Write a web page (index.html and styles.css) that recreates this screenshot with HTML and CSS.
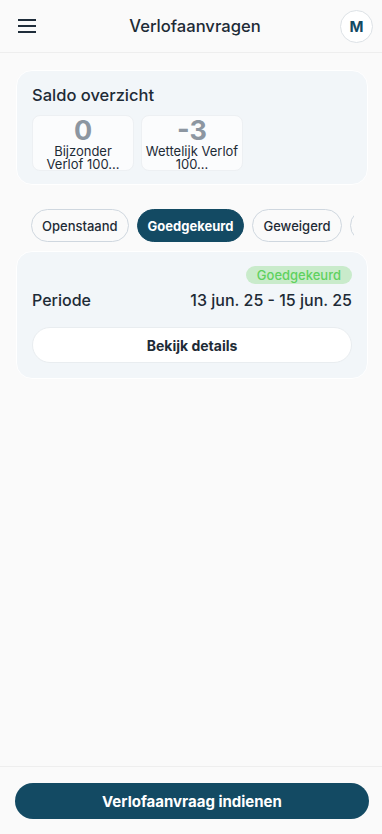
FILE: index.html
```html
<!DOCTYPE html>
<html lang="nl">
<head>
<meta charset="utf-8">
<link rel="stylesheet" href="styles.css">
</head>
<body>
<div class="app">
  <header class="topbar">
    <button class="menu" aria-label="Menu">
      <svg width="18" height="14" viewBox="0 0 18 14"><path d="M0 1h18M0 7h18M0 13h18" stroke="#1f2d3a" stroke-width="2"/></svg>
    </button>
    <h1 class="title">Verlofaanvragen</h1>
    <div class="avatar">M</div>
  </header>

  <main class="content">
    <section class="card saldo">
      <h2 class="saldo-title">Saldo overzicht</h2>
      <div class="tiles">
        <div class="tile">
          <div class="tile-num">0</div>
          <div class="tile-label">Bijzonder Verlof 100...</div>
        </div>
        <div class="tile">
          <div class="tile-num">-3</div>
          <div class="tile-label">Wettelijk Verlof 100...</div>
        </div>
      </div>
    </section>

    <nav class="tabs">
      <span class="tab">Openstaand</span>
      <span class="tab active">Goedgekeurd</span>
      <span class="tab">Geweigerd</span>
      <span class="tab">Geannuleerd</span>
    </nav>

    <section class="card request">
      <div class="badge-row"><span class="badge">Goedgekeurd</span></div>
      <div class="period">
        <span class="period-label">Periode</span>
        <span class="period-value">13 jun. 25 - 15 jun. 25</span>
      </div>
      <button class="details">Bekijk details</button>
    </section>
  </main>

  <footer class="bottombar">
    <button class="primary">Verlofaanvraag indienen</button>
  </footer>
</div>
</body>
</html>
```

FILE: styles.css
```css
* { box-sizing: border-box; }
html, body { margin: 0; padding: 0; }
body {
  background: #fafafa;
  font-family: "Inter", "Noto Sans", sans-serif;
  color: #1e2b36;
}
.app {
  display: flex;
  flex-direction: column;
  height: 834px;
}
.topbar {
  height: 53px;
  display: flex;
  align-items: center;
  justify-content: space-between;
  padding: 0 9px 0 18px;
  border-bottom: 1px solid #eeeeee;
  background: #fafafa;
}
.menu {
  border: 0;
  background: none;
  padding: 0;
  width: 18px;
  height: 14px;
  display: flex;
}
.title {
  margin: 0;
  font-size: 16.6px;
  font-weight: 500;
  color: #1e2b36;
  padding-left: 14px;
}
.avatar {
  width: 33px;
  height: 33px;
  border-radius: 50%;
  background: #ffffff;
  border: 1px solid #dde2e6;
  display: flex;
  align-items: center;
  justify-content: center;
  font-weight: 700;
  font-size: 15px;
  color: #134a63;
}
.content {
  flex: 1;
  padding: 17px 14px 0 16px;
  display: flex;
  flex-direction: column;
}
.card {
  background: #f2f6f9;
  border: 1px solid #ffffff;
  border-radius: 16px;
}
.saldo {
  padding: 14px 15px 14px 15px;
  height: 115px;
}
.saldo-title {
  margin: 0 0 10px 0;
  font-size: 16.5px;
  font-weight: 500;
  color: #1e2b36;
}
.tiles {
  display: flex;
  gap: 7px;
}
.tile {
  width: 102px;
  height: 56px;
  background: #fbfcfd;
  border: 1px solid #edf0f3;
  border-radius: 8px;
  overflow: hidden;
  text-align: center;
  padding: 2px 2px 0;
}
.tile-num {
  font-size: 27px;
  font-weight: 700;
  line-height: 25px;
  color: #8c96a1;
}
.tile-label {
  margin-top: 2px;
  font-size: 13px;
  line-height: 13px;
  color: #1e2b36;
}
.tabs {
  display: flex;
  gap: 8px;
  margin: 24px 0 0 15px;
  padding: 0;
  width: 323px;
  overflow: hidden;
}
.tab {
  flex: 0 0 auto;
  height: 33px;
  padding: 0 10px;
  display: flex;
  align-items: center;
  border: 1px solid #cfd7df;
  border-radius: 17px;
  font-size: 13px;
  font-weight: 500;
  color: #1e2b36;
  background: #fafafa;
}
.tab.active {
  background: #134a63;
  border-color: #134a63;
  color: #ffffff;
  font-weight: 700;
}
.request {
  margin-top: 9px;
  padding: 14px 15px 15px 15px;
}
.badge-row {
  display: flex;
  justify-content: flex-end;
}
.badge {
  background: #c9ebcb;
  color: #5fd15f;
  font-size: 13px;
  font-weight: 500;
  padding: 0 11px;
  height: 18px;
  line-height: 18px;
  border-radius: 9px;
}
.period {
  display: flex;
  justify-content: space-between;
  align-items: center;
  margin-top: 6px;
  font-size: 16px;
  font-weight: 500;
}
.details {
  margin-top: 17px;
  width: 100%;
  height: 36px;
  border: 1px solid #e9edf0;
  border-radius: 18px;
  background: #ffffff;
  font-family: inherit;
  font-size: 14px;
  font-weight: 700;
  color: #1e2b36;
}
.bottombar {
  height: 68px;
  border-top: 1px solid #eeeeee;
  padding: 16px 13px 0 15px;
}
.primary {
  width: 100%;
  height: 36px;
  border: 0;
  border-radius: 18px;
  background: #134a63;
  color: #ffffff;
  font-family: inherit;
  font-size: 15px;
  font-weight: 700;
}
```
